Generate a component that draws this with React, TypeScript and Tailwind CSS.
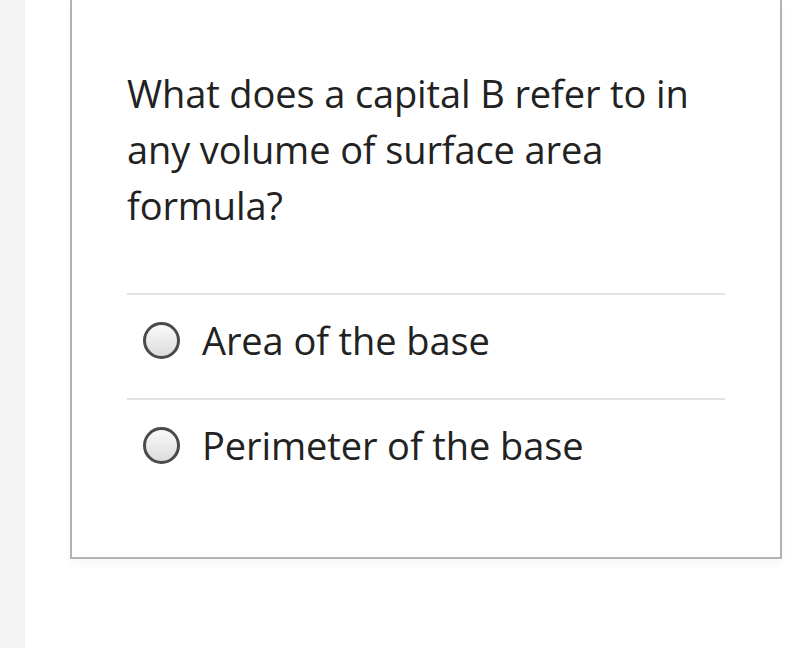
const options = ["Area of the base", "Perimeter of the base"];

const Radio = () => (
  <span className="block w-[37px] h-[37px] shrink-0 rounded-full border-[3px] border-[#4a4a4a] bg-gradient-to-b from-[#fafafa] to-[#dcdcdc]" />
);

export default function App() {
  return (
    <div className="flex h-[648px] w-[809px] bg-white font-['Open_Sans',sans-serif] text-[#222]">
      <div className="w-[25px] shrink-0 bg-[#f4f4f4]" />
      <div className="pl-[45px]">
        <div className="w-[712px] border-x-2 border-b-2 border-[#b3b3b3] px-[55px] pt-[65px] pb-[54px] shadow-[0_6px_8px_rgba(0,0,0,0.03)]">
          <p className="text-[38px] leading-[56px] tracking-[-0.12px]">
            What does a capital B refer to in any volume of surface area formula?
          </p>
          <div className="mt-[60px]">
            {options.map((opt) => (
              <label
                key={opt}
                className="flex items-center border-t-2 border-[#e2e2e2] pt-[17px] pb-[30px] pl-4"
              >
                <Radio />
                <span className="ml-[22px] text-[38px] leading-[56px] tracking-[-0.1px]">{opt}</span>
              </label>
            ))}
          </div>
        </div>
      </div>
    </div>
  );
}
